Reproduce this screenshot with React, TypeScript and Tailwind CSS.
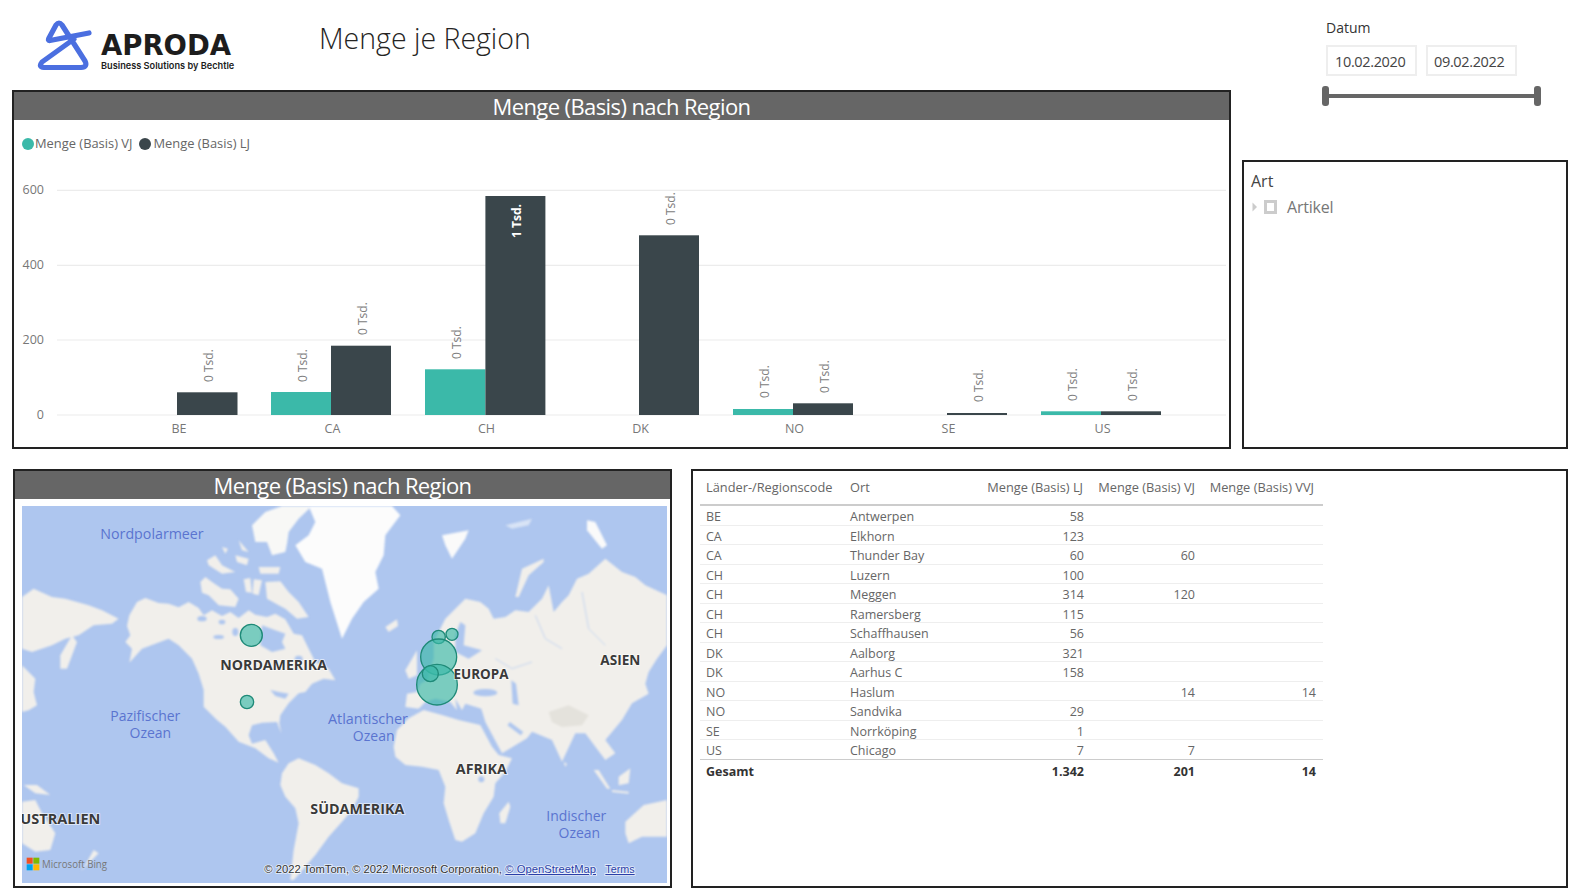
const rows = [
  ["BE", "Antwerpen", "58", "", ""],
  ["CA", "Elkhorn", "123", "", ""],
  ["CA", "Thunder Bay", "60", "60", ""],
  ["CH", "Luzern", "100", "", ""],
  ["CH", "Meggen", "314", "120", ""],
  ["CH", "Ramersberg", "115", "", ""],
  ["CH", "Schaffhausen", "56", "", ""],
  ["DK", "Aalborg", "321", "", ""],
  ["DK", "Aarhus C", "158", "", ""],
  ["NO", "Haslum", "", "14", "14"],
  ["NO", "Sandvika", "29", "", ""],
  ["SE", "Norrköping", "1", "", ""],
  ["US", "Chicago", "7", "7", ""],
];

// x, width, top of each bar in px
const bars = [
  { x: 177, w: 60.5, top: 392.3, fill: "#3a464b" },
  { x: 271, w: 60, top: 392, fill: "#3bb9a9" },
  { x: 331, w: 60, top: 345.7, fill: "#3a464b" },
  { x: 425, w: 60.4, top: 369.3, fill: "#3bb9a9" },
  { x: 485.4, w: 60, top: 196, fill: "#3a464b" },
  { x: 639, w: 60, top: 235.3, fill: "#3a464b" },
  { x: 733, w: 60, top: 409, fill: "#3bb9a9" },
  { x: 793, w: 60, top: 403.3, fill: "#3a464b" },
  { x: 947, w: 60, top: 413, fill: "#3a464b" },
  { x: 1041, w: 60, top: 411.3, fill: "#3bb9a9" },
  { x: 1101, w: 60, top: 411.3, fill: "#3a464b" },
];

const barLabels = [
  [209, 382], [303, 382], [363, 335], [457, 359], [671, 225],
  [765, 398], [825, 393], [979, 402], [1073, 401], [1133, 401],
];

const gridLines = [
  { y: 190.3, label: "600" },
  { y: 265.3, label: "400" },
  { y: 340, label: "200" },
  { y: 415, label: "0" },
];

const xLabels = [
  ["BE", 179], ["CA", 332.5], ["CH", 486.5], ["DK", 640.5], ["NO", 794.5], ["SE", 948.5], ["US", 1102.5],
] as const;

function Logo() {
  return (
    <div className="flex w-[307px] pl-[24px] pt-[18px]">
      <svg width="56" height="54" viewBox="36 18 56 54" fill="none">
        <path
          d="M89 33 L50 40.5 Q47.5 41 49 38 L56 25 Q59 21 62 25 L85 61 Q88 67 81 67.5 L44 67.5 Q38 67 42 62 L74 39"
          stroke="#4b6fe0"
          strokeWidth="5.2"
          strokeLinecap="round"
          strokeLinejoin="round"
        />
      </svg>
      <div className="ml-[9px] flex flex-col pt-[12px] text-[#1d1d1d]">
        <div className="font-['DejaVu_Sans',sans-serif] text-[27.5px] font-bold leading-[30px]">APRODA</div>
        <div className="font-['Inter',sans-serif] text-[9.2px] font-semibold leading-[12px] whitespace-nowrap">Business Solutions by Bechtle</div>
      </div>
    </div>
  );
}

function ChartPanel() {
  return (
    <div className="flex h-[359px] flex-col border-2 border-[#222]">
      <div className="h-[28px] bg-[#666] text-center text-[22px] leading-[29px] tracking-[-0.6px] text-white">Menge (Basis) nach Region</div>
      <div className="flex h-[48px] items-center pl-[8px] text-[12.9px] text-[#666]">
        <span className="mr-[1px] h-[12px] w-[12px] rounded-full bg-[#3bb9a9]" />
        <span>Menge (Basis) VJ</span>
        <span className="ml-[7px] mr-[2px] h-[12px] w-[12px] rounded-full bg-[#3a464b]" />
        <span>Menge (Basis) LJ</span>
      </div>
      <svg className="flex-1" viewBox="14 168 1215 279" width="1215" height="279">
        {gridLines.map((g) => (
          <g key={g.label}>
            <line x1="57" x2="1226" y1={g.y} y2={g.y} stroke="#ececec" strokeWidth="1.2" />
            <text x="44" y={g.y + 4} textAnchor="end" fontSize="12.5" fill="#777">{g.label}</text>
          </g>
        ))}
        {bars.map((b) => (
          <rect key={b.x} x={b.x} y={b.top} width={b.w} height={415 - b.top} fill={b.fill} />
        ))}
        {barLabels.map(([x, y]) => (
          <text key={x} transform={`translate(${x + 4} ${y}) rotate(-90)`} fontSize="12" fill="#808080">0 Tsd.</text>
        ))}
        <text transform="translate(521 238) rotate(-90)" fontSize="12" fontWeight="700" fill="#fff">1 Tsd.</text>
        {xLabels.map(([t, x]) => (
          <text key={t} x={x} y={433} textAnchor="middle" fontSize="12.5" fill="#777">{t}</text>
        ))}
      </svg>
    </div>
  );
}

function DateFilter() {
  return (
    <div className="h-[160px] pl-[84px] text-[#444]">
      <div className="pt-[18px] text-[14px] leading-[20px] text-[#333]">Datum</div>
      <div className="mt-[7px] flex gap-[9px]">
        <div className="flex h-[31px] w-[91px] items-center border-2 border-[#eee] pl-[7px] pt-[2px] text-[14.5px] tracking-[-0.35px]">10.02.2020</div>
        <div className="flex h-[31px] w-[91px] items-center border-2 border-[#eee] pl-[6px] pt-[2px] text-[14.5px] tracking-[-0.35px]">09.02.2022</div>
      </div>
      <div className="-ml-[4px] mt-[10px] flex w-[219px] items-center">
        <span className="h-[20px] w-[7px] rounded-[3px] bg-[#666]" />
        <span className="h-[4px] flex-1 bg-[#666]" />
        <span className="h-[20px] w-[7px] rounded-[3px] bg-[#666]" />
      </div>
    </div>
  );
}

function ArtFilter() {
  return (
    <div className="flex-1 border-2 border-[#222] pl-[7px] pt-[7px]">
      <div className="text-[16px] leading-[24px] text-[#444]">Art</div>
      <div className="flex h-[27px] items-center text-[#777]">
        <svg width="6" height="10" viewBox="0 0 6 10" className="ml-[1px]"><path d="M0.5 0.5 L5 5 L0.5 9.5 Z" fill="#ccc" /></svg>
        <span className="ml-[6px] h-[14px] w-[13px] border-[3px] border-[#ccc]" />
        <span className="ml-[10px] text-[16px] tracking-[-0.2px]">Artikel</span>
      </div>
    </div>
  );
}

function WorldMap() {
  const label = { textAnchor: "middle" as const, lengthAdjust: "spacingAndGlyphs" as const };
  const ocean = { ...label, fill: "#5a74d0", fontSize: 42 };
  const cont = { ...label, fill: "#3a3a3a", fontSize: 42, fontWeight: 700, stroke: "#ffffff", strokeOpacity: 0.7, strokeWidth: 5, paintOrder: "stroke" };
  const attr = { fontFamily: "'Liberation Sans', sans-serif", fontSize: 32, stroke: "#ffffff", strokeOpacity: 0.7, strokeWidth: 5, paintOrder: "stroke", lengthAdjust: "spacingAndGlyphs" as const };
  return (
    <svg viewBox="0 12 1935 1131" width="645" height="377" className="block bg-[#aec6ef]">
      <g className="blur-[2.5px]" fill="#f1efeb" stroke="none">
        {/* north america */}
        <path d="M315 372 L322 340 L345 300 L370 288 L410 303 L440 305 L470 316 L500 300 L530 318 L545 340 L570 325 L600 342 L625 330 L650 348 L680 325 L700 338 L735 345 L760 335 L790 352 L815 395 L840 400 L860 440 L880 480 L920 500 L940 535 L905 530 L870 545 L850 570 L830 574 L800 604 L775 640 L772 664 L778 695 L765 660 L720 662 L690 670 L680 700 L690 725 L730 714 L755 754 L770 782 L740 769 L700 739 L650 719 L610 674 L585 654 L545 614 L545 564 L530 515 L510 470 L470 430 L440 410 L400 425 L360 440 L322 482 L330 440 L310 420 L325 400 Z" />
        <path d="M720 370 L760 385 L790 395 L780 420 L790 440 L750 450 L715 430 Z" fill="#aec6ef" />
        <path d="M745 564 L770 570 L800 575 L790 590 L760 582 Z" fill="#aec6ef" />
        <g fill="#aec6ef">
          <ellipse cx="540" cy="350" rx="14" ry="8" />
          <ellipse cx="590" cy="405" rx="16" ry="6" />
          <ellipse cx="600" cy="360" rx="10" ry="7" />
          <ellipse cx="640" cy="390" rx="9" ry="12" />
          <ellipse cx="830" cy="470" rx="12" ry="9" />
        </g>
        {/* arctic islands */}
        <path d="M535 240 L550 225 L570 240 L600 260 L625 262 L650 290 L640 315 L590 310 L560 280 L540 272 Z" />
        <path d="M555 175 L580 160 L600 190 L640 210 L600 215 L560 190 Z" />
        <path d="M650 115 L680 150 L660 145 Z" />
        <path d="M600 135 L618 140 L610 155 Z" />
        <path d="M665 232 L685 228 L690 272 L672 270 Z" />
        <path d="M695 232 L720 235 L710 280 L692 275 Z" />
        <path d="M730 240 L775 238 L800 270 L830 300 L860 345 L825 350 L790 320 L770 310 L735 290 Z" />
        <path d="M690 70 L730 30 L780 12 L870 12 L830 50 L800 90 L795 125 L790 150 L750 160 L735 120 L700 120 Z" fill="#f8f8f6" />
        <path d="M710 195 L775 195 L770 215 L715 215 Z" />
        <path d="M640 160 L680 170 L675 190 L645 180 Z" />
        {/* greenland */}
        <path d="M860 12 L880 60 L860 100 L820 130 L850 180 L900 200 L925 300 L960 410 L990 350 L1025 300 L1070 260 L1060 210 L1085 160 L1090 100 L1135 40 L1110 12 Z" fill="#fcfcfc" />
        {/* iceland, svalbard, novaya zemlya */}
        <path d="M1090 375 L1125 352 L1128 372 L1100 390 Z" />
        <path d="M1260 100 L1340 85 L1330 110 L1290 170 L1270 130 Z" fill="#fafafa" />
        <path d="M1450 70 L1530 50 L1520 70 L1470 80 Z" fill="#d8e3f5" />
        <path d="M1565 170 L1500 200 L1480 285 L1490 285 L1520 220 L1565 180 Z" />
        <path d="M1695 55 L1720 60 L1755 130 L1740 140 L1695 85 Z" fill="#fafafa" />
        {/* eurasia */}
        <path d="M1235 420 L1270 350 L1330 290 L1375 300 L1400 320 L1415 350 L1450 345 L1480 325 L1520 330 L1560 290 L1580 250 L1595 330 L1620 300 L1640 280 L1665 230 L1700 215 L1750 170 L1800 210 L1840 225 L1870 250 L1935 280 L1935 430 L1905 470 L1880 510 L1870 545 L1880 575 L1830 604 L1800 654 L1750 714 L1780 754 L1750 774 L1720 734 L1690 694 L1660 694 L1620 779 L1590 714 L1530 689 L1515 709 L1440 754 L1390 660 L1378 620 L1330 605 L1320 625 L1300 590 L1305 625 L1285 600 L1240 590 L1210 600 L1190 620 L1150 615 L1155 575 L1185 570 L1195 545 L1215 535 L1225 500 L1235 470 Z" />
        <path d="M1150 505 L1185 445 L1185 520 L1160 530 Z" />
        <path d="M1580 630 L1640 610 L1700 640 L1680 670 L1620 675 L1590 660 Z" fill="#e4e2dc" />
        <g fill="none" stroke="#c6d6f0" strokeWidth="3">
          <path d="M1540 340 L1570 410 L1620 440" />
          <path d="M1680 270 L1700 380 L1750 430" />
          <path d="M1420 470 L1470 500 L1530 480" />
        </g>
        {/* inland water */}
        <ellipse cx="1390" cy="572" rx="36" ry="11" fill="#aec6ef" />
        <path d="M1468 535 L1482 545 L1490 610 L1472 605 Z" fill="#aec6ef" />
        <path d="M1315 360 L1330 370 L1325 430 L1380 445 L1340 470 L1300 450 L1300 400 Z" fill="#aec6ef" />
        <path d="M1460 665 L1500 695" stroke="#aec6ef" strokeWidth="12" />
        {/* africa, madagascar */}
        <path d="M1115 734 L1125 684 L1160 649 L1205 624 L1260 639 L1310 654 L1375 669 L1410 734 L1430 759 L1470 769 L1450 809 L1420 844 L1415 884 L1385 934 L1360 994 L1320 1019 L1300 1014 L1280 954 L1265 904 L1270 854 L1250 804 L1200 794 L1150 789 L1120 764 Z" />
        <path d="M1460 899 L1465 914 L1450 964 L1435 964 L1432 934 Z" />
        <ellipse cx="1378" cy="832" rx="9" ry="9" fill="#aec6ef" />
        {/* south america */}
        <path d="M775 849 L780 814 L800 784 L830 769 L880 789 L920 814 L960 844 L1010 859 L1010 884 L990 924 L960 959 L920 1004 L880 1059 L850 1094 L815 1134 L805 1134 L815 1044 L830 964 L820 919 L790 884 Z" />
        {/* siberia wrap, kamchatka, japan */}
        <path d="M0 285 L35 260 L90 285 L130 290 L200 310 L240 325 L290 350 L270 365 L215 370 L170 400 L130 410 L90 430 L30 450 L0 440 Z" />
        <path d="M150 400 L165 420 L135 500 L115 500 L115 460 Z" />
        <path d="M0 490 L40 530 L35 570 L45 610 L20 625 L0 630 Z" />
        {/* oceania */}
        <path d="M5 849 L45 849 L85 879 L40 874 Z" />
        <path d="M0 899 L40 894 L60 934 L100 994 L85 1044 L40 1049 L0 1024 Z" />
        <path d="M215 1044 L230 1054 L200 1084 L175 1109 L190 1089 Z" />
        <path d="M1810 959 L1865 909 L1935 894 L1935 1004 L1860 1004 L1820 1024 L1810 994 Z" />
        {/* south-east asia */}
        <path d="M1790 824 L1825 799 L1820 844 L1790 850 Z" />
        <path d="M1715 804 L1730 804 L1765 860 L1755 860 Z" />
        <path d="M1770 864 L1820 869 L1820 875 L1770 870 Z" />
        <path d="M1625 780 L1635 785 L1630 795 Z" />
      </g>
      <g fill="#3bb8a8" fillOpacity="0.65" stroke="#1f8a78" strokeWidth="4">
        <circle cx="688" cy="400" r="33" />
        <circle cx="675" cy="600" r="20" />
        <circle cx="1250" cy="405" r="20" />
        <circle cx="1290" cy="397" r="18" />
        <circle cx="1250" cy="465" r="54" />
        <circle cx="1245" cy="548" r="61" />
        <circle cx="1225" cy="515" r="24" />
      </g>
      <text {...ocean} x="390" y="110" textLength="310">Nordpolarmeer</text>
      <text {...ocean} x="370" y="657" textLength="210">Pazifischer</text>
      <text {...ocean} x="385" y="708" textLength="125">Ozean</text>
      <text {...ocean} x="1038" y="667" textLength="240">Atlantischer</text>
      <text {...ocean} x="1055" y="717" textLength="125">Ozean</text>
      <text {...ocean} x="1663" y="957" textLength="180">Indischer</text>
      <text {...ocean} x="1672" y="1007" textLength="125">Ozean</text>
      <text {...cont} x="755" y="505" textLength="320">NORDAMERIKA</text>
      <text {...cont} x="1377" y="532" textLength="165">EUROPA</text>
      <text {...cont} x="1795" y="490" textLength="120">ASIEN</text>
      <text {...cont} x="1378" y="816" textLength="153">AFRIKA</text>
      <text {...cont} x="1006" y="936" textLength="282">SÜDAMERIKA</text>
      <text {...cont} x="100" y="966" textLength="270">AUSTRALIEN</text>
      <rect x="14" y="1067" width="18" height="18" fill="#f25022" />
      <rect x="34" y="1067" width="18" height="18" fill="#7fba00" />
      <rect x="14" y="1087" width="18" height="18" fill="#00a4ef" />
      <rect x="34" y="1087" width="18" height="18" fill="#ffb900" />
      <text x="60" y="1097" fontSize="30" fill="#777" textLength="195" lengthAdjust="spacingAndGlyphs">Microsoft Bing</text>
      <text {...attr} x="727" y="1113" fill="#333" textLength="713">© 2022 TomTom, © 2022 Microsoft Corporation,</text>
      <text {...attr} x="1450" y="1113" fill="#2a3fa8" textLength="272" className="underline">© OpenStreetMap</text>
      <text {...attr} x="1750" y="1113" fill="#2a3fa8" textLength="88" className="underline">Terms</text>
    </svg>
  );
}

function MapPanel() {
  return (
    <div className="h-[419px] w-[659px] border-2 border-[#222]">
      <div className="h-[28px] bg-[#666] text-center text-[22px] leading-[29px] tracking-[-0.6px] text-white">Menge (Basis) nach Region</div>
      <div className="pl-[7px] pt-[7px]">
        <WorldMap />
      </div>
    </div>
  );
}

const gridCols = "grid grid-cols-[150px_130px_106px_111px_126px]";

function TablePanel() {
  return (
    <div className="ml-[19px] h-[419px] w-[877px] border-2 border-[#222] pl-[7px] text-[12.5px] text-[#666]">
      <div className="w-[623px]">
        <div className={`${gridCols} h-[35px] items-center border-b-2 border-[#ccc] pt-[1px] text-[12.8px]`}>
          <div className="whitespace-nowrap pl-[6px]">Länder-/Regionscode</div>
          <div>Ort</div>
          <div className="whitespace-nowrap pr-[3px] text-right">Menge (Basis) LJ</div>
          <div className="whitespace-nowrap pr-[2px] text-right">Menge (Basis) VJ</div>
          <div className="whitespace-nowrap pr-[9px] text-right">Menge (Basis) VVJ</div>
        </div>
        {rows.map((r) => (
          <div key={r[1]} className={`${gridCols} h-[19.5px] items-center border-b border-[#eee] pt-[3px] leading-[15px]`}>
            <div className="pl-[6px]">{r[0]}</div>
            <div>{r[1]}</div>
            <div className="pr-[2px] text-right">{r[2]}</div>
            <div className="pr-[2px] text-right">{r[3]}</div>
            <div className="pr-[7px] text-right">{r[4]}</div>
          </div>
        ))}
        <div className={`${gridCols} -mt-px h-[21px] items-center border-t border-[#ccc] pt-[3px] font-bold leading-[15px] text-[#333]`}>
          <div className="pl-[6px]">Gesamt</div>
          <div />
          <div className="pr-[2px] text-right">1.342</div>
          <div className="pr-[2px] text-right">201</div>
          <div className="pr-[7px] text-right">14</div>
        </div>
      </div>
    </div>
  );
}

export default function App() {
  return (
    <div className="h-[891px] w-[1579px] overflow-hidden bg-white font-['Open_Sans','Noto_Sans',sans-serif]">
      <div className="flex h-[449px] pl-[12px]">
        <div className="w-[1219px]">
          <div className="flex h-[90px]">
            <Logo />
            <div className="pt-[16px] text-[28.5px] font-light leading-[44px] text-[#252423]">Menge je Region</div>
          </div>
          <ChartPanel />
        </div>
        <div className="ml-[11px] flex w-[326px] flex-col">
          <DateFilter />
          <ArtFilter />
        </div>
      </div>
      <div className="mt-[20px] flex pl-[13px]">
        <MapPanel />
        <TablePanel />
      </div>
    </div>
  );
}
